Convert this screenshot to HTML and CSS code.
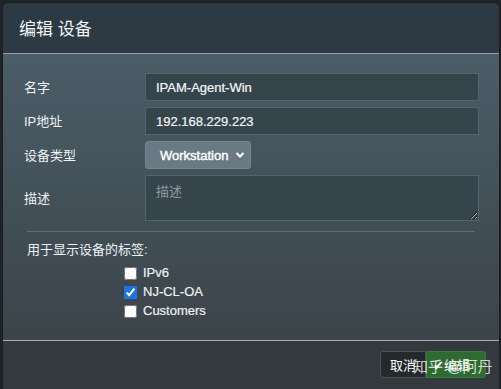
FILE: index.html
```html
<!DOCTYPE html>
<html lang="zh-CN">
<head>
    <meta charset="UTF-8">
    <title>编辑 设备</title>
    <link rel="stylesheet" href="styles.css">
</head>
<body>
  <div class="modal">
    <div class="modal-header">
      <h1>编辑 设备</h1>
    </div>
    <form class="modal-body">
      <div class="row">
        <label for="name">名字</label>
        <input type="text" id="name" value="IPAM-Agent-Win">
      </div>
      <div class="row">
        <label for="ip">IP地址</label>
        <input type="text" id="ip" value="192.168.229.223">
      </div>
      <div class="row">
        <label for="type">设备类型</label>
        <div class="select">
          <span>Workstation</span>
          <svg width="10" height="8" viewBox="0 0 10 8"><path d="M1.5 2 L5 5.5 L8.5 2" fill="none" stroke="#fff" stroke-width="2"/></svg>
        </div>
      </div>
      <div class="row">
        <label for="desc">描述</label>
        <textarea id="desc" placeholder="描述"></textarea>
      </div>
      <hr>
      <p class="tags-title">用于显示设备的标签:</p>
      <div class="tags">
        <label class="tag"><input type="checkbox"> IPv6</label>
        <label class="tag"><input type="checkbox" checked> NJ-CL-OA</label>
        <label class="tag"><input type="checkbox"> Customers</label>
      </div>
    </form>
    <div class="modal-footer">
      <div class="btn-group">
        <button class="btn cancel" type="button">取消</button>
        <button class="btn save" type="button">✔编辑</button>
      </div>
      <span class="watermark">知乎 @阿丹</span>
    </div>
  </div>
</body>
</html>
```

FILE: styles.css
```css
html, body {
    height: 100%;
}
body {
    margin: 0;
    background: #1e2428;
    font-family: "Liberation Sans", "Noto Sans CJK SC", sans-serif;
    font-size: 13px;
    color: #eef1f3;
    overflow: hidden;
}
.modal {
    margin: 3px 0 0 3px;
    width: 496px;
    height: 400px;
    border-radius: 5px;
    overflow: hidden;
    display: flex;
    flex-direction: column;
    box-shadow: 0 0 2px #111;
}
.modal-header {
    height: 50px;
    padding-left: 16px;
    background: #2d3a43;
    border-bottom: 1px solid #8e9ea8;
    display: flex;
    align-items: center;
}
h1 {
    margin: 0 0 2px;
    font-size: 17px;
    font-weight: normal;
    color: #f4f6f7;
}
.modal-body {
    height: 267px;
    padding: 19px 20px 0 21px;
    background: linear-gradient(#4b5d68, #3b4449);
}
.row {
    display: grid;
    grid-template-columns: 121px 1fr;
    align-items: center;
    margin-bottom: 6px;
}
.row label {
    color: #eef1f3;
    margin-bottom: 2px;
}
input[type=text], textarea {
    height: 28px;
    box-sizing: border-box;
    padding: 0 10px;
    background: #36444c;
    border: 1px solid #55656e;
    color: #f4f6f7;
    font: inherit;
    -webkit-text-stroke: 0.2px #f4f6f7;
    outline: none;
}
textarea {
    display: block;
    height: 46px;
    padding: 5px 10px;
    resize: vertical;
    -webkit-text-stroke: 0;
}
textarea::placeholder {
    color: #8e9aa1;
}
.select {
    width: 106px;
    height: 28px;
    box-sizing: border-box;
    padding: 0 5px 0 14px;
    background: #6a7a84;
    border: 1px solid #76858e;
    border-radius: 3px;
    display: flex;
    align-items: center;
    justify-content: space-between;
    color: #fff;
    -webkit-text-stroke: 0.4px #fff;
}
hr {
    margin: 10px 4px 0 3px;
    border: none;
    border-top: 1px solid #5f6d75;
}
.tags-title {
    margin: 7px 0 5px 3px;
}
.tags {
    padding-left: 100px;
}
.tag {
    display: flex;
    align-items: center;
    height: 19px;
    gap: 6px;
    -webkit-text-stroke: 0.2px #eef1f3;
}
.tag input {
    width: 13px;
    height: 13px;
    margin: 2px 0 0;
    accent-color: #1a73e8;
}
.modal-footer {
    position: relative;
    flex: 1;
    background: #33393d;
    border-top: 1px solid #a5adb2;
    padding: 10px 13px 0 0;
    display: flex;
    justify-content: flex-end;
    align-items: flex-start;
}
.btn-group {
    display: flex;
}
.btn {
    height: 27px;
    font: inherit;
    color: #fff;
    border: 1px solid #4b5256;
    cursor: pointer;
}
.cancel {
    width: 46px;
    background: #24292b;
    border-radius: 3px 0 0 3px;
}
.save {
    width: 60px;
    background: #2e6b33;
    border-color: #3a7a3f;
    border-radius: 0 3px 3px 0;
    text-align: left;
    padding-left: 6px;
}
.watermark {
    position: absolute;
    left: 410px;
    top: 14px;
    font-size: 15px;
    white-space: nowrap;
    color: rgba(255, 255, 255, 0.8);
}
```
